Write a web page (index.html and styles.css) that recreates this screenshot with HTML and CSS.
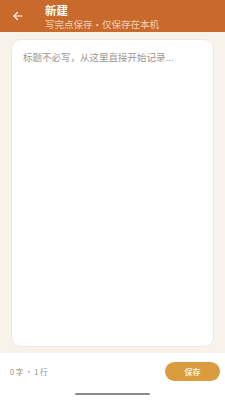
FILE: index.html
```html
<!DOCTYPE html>
<html>
<head>
<meta charset="utf-8">
<title>新建</title>
<link rel="stylesheet" href="styles.css">
</head>
<body>

<div class="app">
  <!-- top bar -->
  <div class="topbar">
    <button class="back-button" aria-label="返回">
      <svg width="12" height="12" viewBox="0 0 24 24" fill="none" stroke="#fff" stroke-width="2.4" stroke-linecap="round" stroke-linejoin="round">
        <path d="M20 12H4"/>
        <path d="M11 5l-7 7 7 7"/>
      </svg>
    </button>
    <div class="titleContainer">
      <div class="title">新建</div>
      <div class="subtitle">写完点保存·仅保存在本机</div>
    </div>
  </div>

  <!-- editor -->
  <div class="editorContainer">
    <div class="editorCard">
      <div class="placeholder">标题不必写，从这里直接开始记录...</div>
    </div>
  </div>

  <!-- bottom bar -->
  <div class="bottombar">
    <div class="statusRow">
      <span class="counter">0 字 · 1 行</span>
      <button class="save-button">保存</button>
    </div>
    <div class="homeIndicator"></div>
  </div>
</div>

</body>
</html>
```

FILE: styles.css
```css
:root {
  --header-bg: #c96a2d;
  --page-bg: #f7f3ea;
  --card-bg: #ffffff;
  --card-border: #efe9dc;
  --muted: #8f8a84;
  --accent: #d99c3f;
}

html, body {
  margin: 0;
  padding: 0;
}

body {
  width: 225px;
  height: 400px;
  font-family: "Noto Sans CJK SC", "Noto Sans", sans-serif;
  background-color: #ffffff;
}

.app {
  height: 400px;
  display: flex;
  flex-direction: column;
}

.topbar {
  height: 32px;
  background-color: var(--header-bg);
  display: flex;
  align-items: flex-start;
  flex-shrink: 0;
}

.back-button {
  width: 30px;
  height: 32px;
  margin-left: 3px;
  padding: 0;
  border: none;
  background: none;
  display: flex;
  align-items: center;
  justify-content: center;
}

.titleContainer {
  margin-left: 12px;
  padding-top: 2px;
  display: flex;
  flex-direction: column;
}

.title {
  color: #ffffff;
  font-size: 11.5px;
  font-weight: 700;
  line-height: normal;
}

.subtitle {
  color: #f6d2b6;
  font-size: 9.5px;
  line-height: normal;
  margin-top: -1px;
}

.editorContainer {
  flex-grow: 1; /* card takes up available space */
  background-color: var(--page-bg);
  padding: 7px 11px 6px 11px;
  display: flex;
}

.editorCard {
  flex-grow: 1;
  background-color: var(--card-bg);
  border: 1px solid var(--card-border);
  border-radius: 10px;
  padding: 10px 11px;
}

.placeholder {
  color: #9a958f;
  font-size: 9.5px;
  line-height: 14px;
}

.bottombar {
  height: 47px;
  flex-shrink: 0;
  background-color: #ffffff;
  display: flex;
  flex-direction: column;
  align-items: center;
}

.statusRow {
  width: 100%;
  box-sizing: border-box;
  padding: 9px 5px 0 10px;
  display: flex;
  align-items: center;
  justify-content: space-between;
}

.counter {
  color: var(--muted);
  font-size: 7.5px;
}

.save-button {
  width: 55px;
  height: 19px;
  border: none;
  border-radius: 10px;
  background-color: var(--accent);
  color: #fbeedd;
  font-family: inherit;
  font-size: 8px;
  font-weight: 700;
  padding: 0;
}

.homeIndicator {
  width: 75px;
  height: 2px;
  border-radius: 1px;
  background-color: #8a8a8a;
  margin-top: 12px;
}
```
